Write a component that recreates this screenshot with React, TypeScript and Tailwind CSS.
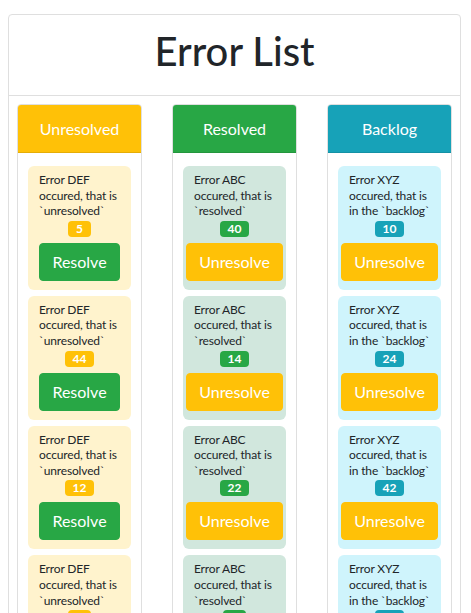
type Column = {
  title: string;
  head: string;
  item: string;
  badge: string;
  label: string;
  text: string;
  action: string;
  actionBg: string;
  counts: number[];
};

const columns: Column[] = [
  {
    title: "Unresolved",
    head: "bg-[#ffc107]",
    item: "bg-[#fff3cd]",
    badge: "bg-[#ffc107]",
    label: "Error DEF",
    text: "occured, that is `unresolved`",
    action: "Resolve",
    actionBg: "bg-[#28a745] border-[#28a745]",
    counts: [5, 44, 12, 9, 31],
  },
  {
    title: "Resolved",
    head: "bg-[#28a745]",
    item: "bg-[#d1e7dd]",
    badge: "bg-[#28a745]",
    label: "Error ABC",
    text: "occured, that is `resolved`",
    action: "Unresolve",
    actionBg: "bg-[#ffc107] border-[#ffc107]",
    counts: [40, 14, 22, 7, 18],
  },
  {
    title: "Backlog",
    head: "bg-[#17a2b8]",
    item: "bg-[#cff4fc]",
    badge: "bg-[#17a2b8]",
    label: "Error XYZ",
    text: "occured, that is in the `backlog`",
    action: "Unresolve",
    actionBg: "bg-[#ffc107] border-[#ffc107]",
    counts: [10, 24, 42, 16, 3],
  },
];

function ErrorItem({ col, count }: { col: Column; count: number }) {
  return (
    <div className={`${col.item} rounded-[6px] pt-[6px] pb-[9px] pl-[11px] pr-[9px]`}>
      <p className="text-[12px] leading-[15.6px] tracking-[-0.15px] text-[#212529]">
        {col.label} {col.text}
      </p>
      {/* badge and button are centred on the whole card, not the text box */}
      <div className="flex justify-center mt-[2px] -ml-[11px] -mr-[9px]">
        <span
          className={`${col.badge} text-white text-[12px] font-bold h-4 px-2 rounded-[4px] flex items-center justify-center`}
        >
          {count}
        </span>
      </div>
      <div className="flex justify-center mt-[6px] -ml-[11px] -mr-[9px]">
        <button
          className={`${col.actionBg} shrink-0 whitespace-nowrap border text-white text-[16px] h-[38px] px-3 rounded-[4px]`}
        >
          {col.action}
        </button>
      </div>
    </div>
  );
}

export default function App() {
  return (
    <div className="pl-2 pr-[10px] pt-[14px] pb-4 bg-white font-['Lato','Open_Sans',sans-serif] text-[#212529]">
      <div className="border border-[#dfdfdf] rounded-[4px]">
        <div className="border-b border-[#dfdfdf] pt-3 pb-5 text-center">
          <h1 className="text-[40px] leading-[48px] font-medium">Error List</h1>
        </div>

        <div className="grid grid-cols-3 gap-[30px] px-2 pt-2 pb-3">
          {columns.map((col) => (
            <div key={col.title} className="border border-[#dfdfdf] rounded-[4px]">
              <div
                className={`${col.head} h-12 flex items-center justify-center text-white text-[16px] rounded-t-[3px] border-b border-black/10`}
              >
                {col.title}
              </div>
              <div className="px-[10px] pt-[13px] pb-3 flex flex-col gap-[6px]">
                {col.counts.map((n, i) => (
                  <ErrorItem key={i} col={col} count={n} />
                ))}
              </div>
            </div>
          ))}
        </div>
      </div>
    </div>
  );
}
